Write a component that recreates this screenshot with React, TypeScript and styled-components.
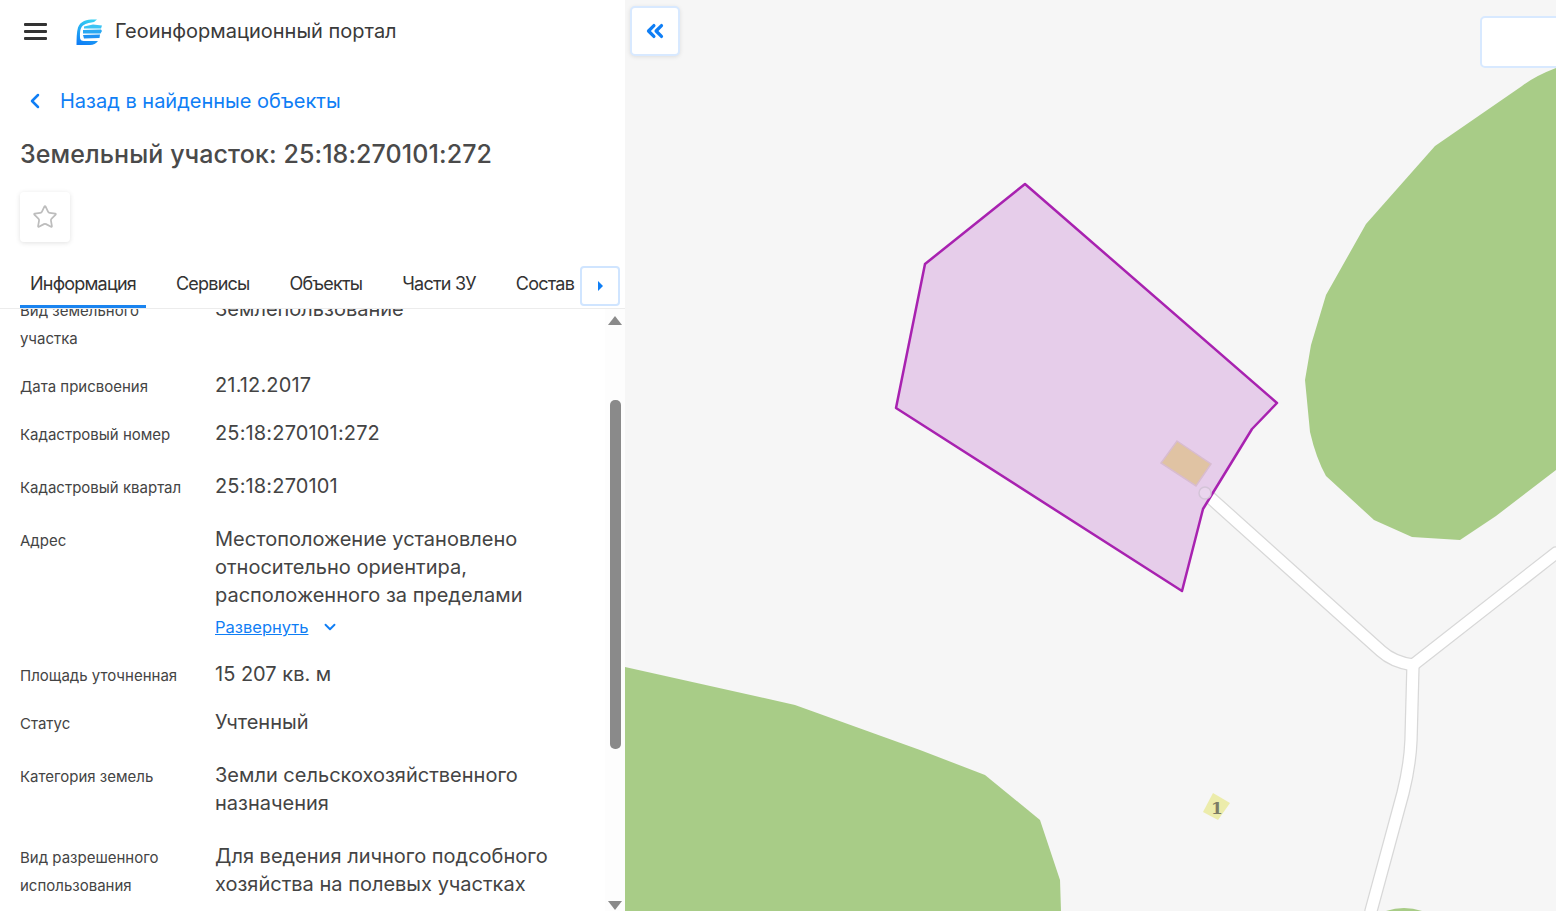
import styled, { createGlobalStyle } from "styled-components";
import { ChevronDown, ChevronLeft, ChevronsLeft, Star } from "lucide-react";

const GlobalStyle = createGlobalStyle`
  html, body {
    margin: 0;
    height: 100%;
    overflow: hidden;
    background: #fff;
    font-family: Inter, "Liberation Sans", sans-serif;
    color: #333;
  }
  * { box-sizing: border-box; }
`;

const BLUE = "#0f7ef5";
const LEFT_ROAD = "M1205 493 1381 651Q1393 662 1413 665L1556 553";
const DOWN_ROAD = "M1413 665 1411 740Q1410 765 1403 793L1371 911";

interface InfoRow {
  label: string[];
  value: string[];
  gap: number;
  more?: boolean;
  numeric?: boolean;
}

const rows: InfoRow[] = [
  { label: ["Вид земельного", "участка"], value: ["Землепользование"], gap: 18 },
  { label: ["Дата присвоения"], value: ["21.12.2017"], gap: 18, numeric: true },
  { label: ["Кадастровый номер"], value: ["25:18:270101:272"], gap: 23, numeric: true },
  { label: ["Кадастровый квартал"], value: ["25:18:270101"], gap: 23, numeric: true },
  {
    label: ["Адрес"],
    value: ["Местоположение установлено", "относительно ориентира,", "расположенного за пределами"],
    gap: 15,
    more: true,
  },
  { label: ["Площадь уточненная"], value: ["15 207 кв. м"], gap: 18 },
  { label: ["Статус"], value: ["Учтенный"], gap: 23 },
  { label: ["Категория земель"], value: ["Земли сельскохозяйственного", "назначения"], gap: 25 },
  {
    label: ["Вид разрешенного", "использования"],
    value: ["Для ведения личного подсобного", "хозяйства на полевых участках"],
    gap: 0,
  },
];

const tabs = ["Информация", "Сервисы", "Объекты", "Части ЗУ", "Состав"];

function Logo() {
  return (
    <svg width="28" height="28" viewBox="0 0 28 28">
      <defs>
        <linearGradient id="logoGrad" x1="0.6" y1="0" x2="0.3" y2="1">
          <stop offset="0" stopColor="#35d0f2" />
          <stop offset="1" stopColor="#0f7ef5" />
        </linearGradient>
      </defs>
      <path
        d="M22 1.5C14 1 5.5 2 3 9.5 1.6 14 1.6 21 1.5 27H15c3.5 0 6-1.5 8-4H9.5c-2.5 0-4.5-.5-4.5-4 0-5 0-9 3-11.5 3-2.5 8-3 11-3.5z"
        fill="url(#logoGrad)"
      />
      <path d="M9 8.5 18 6.5 27 7.5 26 10.5 9 10.5z" fill="#3cc4f4" />
      <path d="M8 12 26 11.5 27 13 25.5 15.5 8 15.5z" fill="#2aa8f2" />
      <path d="M8 17 25 16.5 24.5 20 9 20.5z" fill="#1f92f3" />
    </svg>
  );
}

export default function App() {
  return (
    <>
      <GlobalStyle />
      <Page>
        <Sidebar>
          <Header>
            <MenuButton>
              <span />
              <span />
              <span />
            </MenuButton>
            <Logo />
            <PortalName>Геоинформационный портал</PortalName>
          </Header>

          <BackLink>
            <ChevronLeft size={24} strokeWidth={2.5} />
            <span>Назад в найденные объекты</span>
          </BackLink>

          <Title>Земельный участок: 25:18:270101:272</Title>

          <FavButton>
            <Star size={26} strokeWidth={1.6} />
          </FavButton>

          <TabBar>
            {tabs.map((tab, i) => (
              <Tab key={tab} $active={i === 0}>
                {tab}
              </Tab>
            ))}
            <TabArrow>
              <i />
            </TabArrow>
          </TabBar>

          <ScrollArea>
            <Rows>
              {rows.map((row) => (
                <Row key={row.label[0]} $gap={row.gap}>
                  <Label>
                    {row.label.map((line) => (
                      <div key={line}>{line}</div>
                    ))}
                  </Label>
                  <Value $numeric={row.numeric}>
                    {row.value.map((line) => (
                      <div key={line}>{line}</div>
                    ))}
                    {row.more && (
                      <More>
                        <a>Развернуть</a>
                        <ChevronDown size={18} strokeWidth={2.5} />
                      </More>
                    )}
                  </Value>
                </Row>
              ))}
            </Rows>
            <ScrollTrack>
              <ArrowUp />
              <Thumb />
              <ArrowDown />
            </ScrollTrack>
          </ScrollArea>
        </Sidebar>

        <MapPane>
          <MapSvg viewBox="625 0 931 911">
            <g fill="#a8cc87">
              <path d="M1556 68Q1535 76 1522 86L1435 146 1366 224 1326 295 1311 345 1305 380 1310 432Q1316 458 1326 476L1374 520 1412 537 1460 540 1496 516 1556 470z" />
              <path d="M625 667 795 705 920 750 985 775 1040 820 1060 880 1061 911H625z" />
              <path d="M1386 911Q1404 905 1422 911z" />
            </g>

            <g fill="none" strokeLinejoin="round" strokeLinecap="round">
              <g stroke="#d8d8d8" strokeWidth="13.5">
                <path d={LEFT_ROAD} />
                <path d={DOWN_ROAD} />
              </g>
              <g stroke="#fff" strokeWidth="11">
                <path d={LEFT_ROAD} />
                <path d={DOWN_ROAD} />
              </g>
            </g>

            <path
              d="M1025 184 925 264 896 408 1182 591 1203 509 1252 429 1277 403z"
              fill="#e6cdea"
              stroke="#a822b0"
              strokeWidth="2.5"
              strokeLinejoin="round"
            />
            <path
              d="M1177 441 1211 464 1196 486 1161 463z"
              fill="#e0c3a3"
              stroke="#d8bcd0"
              strokeWidth="1.5"
            />
            <circle cx="1205" cy="493" r="6" fill="#ead5ee" stroke="#d4c4d8" strokeWidth="1.5" />

            <path d="M1213 793 1230 803 1218 820 1203 812z" fill="#eaea9e" opacity="0.85" />
            <MapNumber x="1217" y="814">
              1
            </MapNumber>
          </MapSvg>

          <CollapseButton>
            <ChevronsLeft size={26} strokeWidth={3} />
          </CollapseButton>
          <CornerPanel />
        </MapPane>
      </Page>
    </>
  );
}

const Page = styled.div`
  display: flex;
  width: 100vw;
  height: 100vh;
`;

const Sidebar = styled.aside`
  width: 625px;
  flex: none;
  display: flex;
  flex-direction: column;
  background: #fff;
`;

const Header = styled.header`
  height: 63px;
  display: flex;
  align-items: center;
  padding-left: 24px;
`;

const MenuButton = styled.div`
  width: 23px;
  display: flex;
  flex-direction: column;
  gap: 4.5px;
  margin-right: 28px;

  span {
    height: 2.5px;
    background: #333;
    border-radius: 1px;
  }
`;

const PortalName = styled.div`
  margin: 0 0 2px 12px;
  font-size: 20px;
  color: #3a3a3a;
`;

const BackLink = styled.div`
  height: 28px;
  margin-top: 24px;
  display: flex;
  align-items: center;
  gap: 13px;
  padding-left: 23px;
  color: ${BLUE};
  font-size: 20px;
`;

const Title = styled.h1`
  margin: 23px 0 0 20px;
  font-size: 25px;
  line-height: 32px;
  font-weight: 500;
  letter-spacing: 0.1px;
  color: #4a4a4a;
  white-space: nowrap;
`;

const FavButton = styled.div`
  width: 50px;
  height: 50px;
  margin: 22px 0 0 20px;
  display: flex;
  align-items: center;
  justify-content: center;
  border-radius: 4px;
  color: #bdbdbd;
  box-shadow: 0 1px 5px rgba(0, 0, 0, 0.12);
`;

const TabBar = styled.nav`
  position: relative;
  height: 44px;
  margin-top: 23px;
  padding-left: 20px;
  display: flex;
  gap: 20px;
  border-bottom: 1px solid #ececec;
  overflow: hidden;
  flex: none;
  z-index: 1;
  background: #fff;
`;

const Tab = styled.div<{ $active?: boolean }>`
  height: 43px;
  padding: 0 10px 4px;
  display: flex;
  align-items: center;
  font-size: 18px;
  letter-spacing: -0.78px;
  color: #333;
  white-space: nowrap;
  border-bottom: 3px solid ${(p) => (p.$active ? "#1a84f0" : "transparent")};
`;

const TabArrow = styled.div`
  position: absolute;
  left: 580px;
  top: 1px;
  width: 40px;
  height: 40px;
  display: flex;
  align-items: center;
  justify-content: center;
  background: #fff;
  border: 2px solid #d0e5ff;
  border-radius: 4px;

  i {
    border-left: 5px solid ${BLUE};
    border-top: 5px solid transparent;
    border-bottom: 5px solid transparent;
  }
`;

const ScrollArea = styled.div`
  flex: 1;
  min-height: 0;
  display: flex;
  overflow: hidden;
`;

const Rows = styled.div`
  flex: 1;
  min-width: 0;
  margin-top: -14px;
  padding-left: 20px;
`;

const Row = styled.div<{ $gap: number }>`
  display: grid;
  grid-template-columns: 195px 1fr;
  margin-bottom: ${(p) => p.$gap}px;
`;

const Label = styled.div`
  padding-top: 2px;
  font-size: 15px;
  line-height: 28px;
  color: #444;
`;

const Value = styled.div<{ $numeric?: boolean }>`
  font-size: 20px;
  line-height: 28px;
  letter-spacing: ${(p) => (p.$numeric ? "0.15px" : "0")};
  color: #444;
`;

const More = styled.div`
  display: flex;
  align-items: center;
  gap: 13px;
  height: 36px;
  color: ${BLUE};
  font-size: 16.5px;

  a {
    text-decoration: underline;
  }
`;

const ScrollTrack = styled.div`
  width: 20px;
  flex: none;
  display: flex;
  flex-direction: column;
  align-items: center;
  background: #fdfdfd;
  padding-top: 7px;
`;

const ArrowUp = styled.div`
  border-left: 7px solid transparent;
  border-right: 7px solid transparent;
  border-bottom: 9px solid #8a8a8a;
`;

const Thumb = styled.div`
  width: 11px;
  height: 349px;
  margin-top: 75px;
  border-radius: 5px;
  background: #8a8a8a;
`;

const ArrowDown = styled.div`
  margin-top: auto;
  margin-bottom: 1px;
  border-left: 7px solid transparent;
  border-right: 7px solid transparent;
  border-top: 9px solid #8a8a8a;
`;

const MapPane = styled.main`
  position: relative;
  flex: 1;
  overflow: hidden;
  background: #f6f6f6;
`;

const MapSvg = styled.svg`
  display: block;
  width: 100%;
  height: 100%;
`;

const MapNumber = styled.text`
  font-family: "DejaVu Serif", serif;
  font-size: 17px;
  font-weight: 700;
  fill: #7c7c66;
  text-anchor: middle;
`;

const CollapseButton = styled.div`
  position: absolute;
  left: 5px;
  top: 6px;
  width: 50px;
  height: 50px;
  display: flex;
  align-items: center;
  justify-content: center;
  background: #fff;
  color: ${BLUE};
  border: 2px solid #d8e9ff;
  border-radius: 5px;
  box-shadow: 0 1px 4px rgba(0, 0, 0, 0.1);
`;

const CornerPanel = styled.div`
  position: absolute;
  left: 855px;
  top: 16px;
  width: 120px;
  height: 52px;
  background: #fff;
  border: 2px solid #d8e9ff;
  border-radius: 5px;
`;
